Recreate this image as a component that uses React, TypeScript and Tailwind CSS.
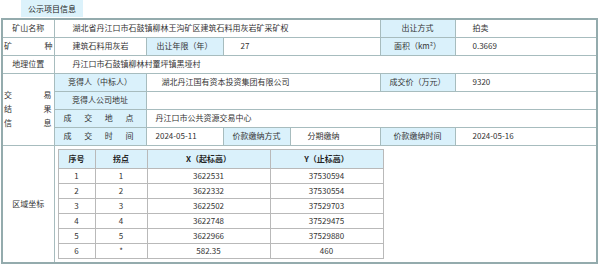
import React from "react";

const td = "border border-[#a7bcbe] p-0 h-[18px] align-middle whitespace-nowrap";
const lab = `${td} bg-[#daf1fb] text-center`;
const val = `${td} bg-white text-left`;

function Spread({ chars, className = "" }: { chars: string[]; className?: string }) {
  return (
    <div className={`flex justify-between ${className}`}>
      {chars.map((c, i) => (
        <span key={i}>{c}</span>
      ))}
    </div>
  );
}

const points = [
  ["1", "1", "3622531", "37530594"],
  ["2", "2", "3622332", "37530554"],
  ["3", "3", "3622502", "37529703"],
  ["4", "4", "3622748", "37529475"],
  ["5", "5", "3622966", "37529880"],
  ["6", "*", "582.35", "460"],
];

export default function App() {
  return (
    <div className="w-[600px] h-[267px] bg-white text-[8px] leading-[12px] text-[#333] font-['Noto_Sans_CJK_SC','Liberation_Sans',sans-serif] overflow-hidden">
      <div className="ml-[21px] w-[62px] h-[17px] bg-[#dcf2fb] flex items-center justify-center text-[#222]">
        公示项目信息
      </div>
      <table className="mt-[1px] ml-[1px] w-[597px] table-fixed border-collapse border-2 border-[#94abad]">
        <colgroup>
          <col className="w-[52px]" />
          <col className="w-[92px]" />
          <col className="w-[77px]" />
          <col className="w-[67px]" />
          <col className="w-[90px]" />
          <col className="w-[75px]" />
          <col />
        </colgroup>
        <tbody>
          <tr>
            <td className={`${td} text-center`}>矿山名称</td>
            <td colSpan={4} className={`${val} pl-[18px]`}>
              湖北省丹江口市石鼓镇柳林王沟矿区建筑石料用灰岩矿采矿权
            </td>
            <td className={lab}>出让方式</td>
            <td className={`${val} pl-[17px]`}>拍卖</td>
          </tr>
          <tr>
            <td className={td}>
              <Spread chars={["矿", "种"]} className="pl-[1px] pr-[1px]" />
            </td>
            <td className={`${val} pl-[18px]`}>建筑石料用灰岩</td>
            <td className={lab}>出让年限（年）</td>
            <td colSpan={2} className={`${val} pl-[17px]`}>27</td>
            <td className={lab}>面积（km²）</td>
            <td className={`${val} pl-[17px]`}>0.3669</td>
          </tr>
          <tr>
            <td className={`${td} text-center`}>地理位置</td>
            <td colSpan={6} className={`${val} pl-[18px]`}>丹江口市石鼓镇柳林村罿坪镇黑垭村</td>
          </tr>
          <tr>
            <td rowSpan={4} className={td}>
              <div className="flex flex-col gap-[2px] pl-[1px] pr-[2px]">
                <Spread chars={["交", "易"]} />
                <Spread chars={["结", "果"]} />
                <Spread chars={["信", "息"]} />
              </div>
            </td>
            <td className={lab}>竞得人（中标人）</td>
            <td colSpan={3} className={`${val} pl-[15px]`}>湖北丹江国有资本投资集团有限公司</td>
            <td className={lab}>成交价（万元）</td>
            <td className={`${val} pl-[17px]`}>9320</td>
          </tr>
          <tr>
            <td className={lab}>竞得人公司地址</td>
            <td colSpan={5} className={val}></td>
          </tr>
          <tr>
            <td className={lab}>
              <Spread chars={["成", "交", "地", "点"]} className="pl-[9px] pr-[12px]" />
            </td>
            <td colSpan={5} className={`${val} pl-[9px]`}>丹江口市公共资源交易中心</td>
          </tr>
          <tr>
            <td className={lab}>
              <Spread chars={["成", "交", "时", "间"]} className="pl-[9px] pr-[12px]" />
            </td>
            <td className={`${val} pl-[9px]`}>2024-05-11</td>
            <td className={lab}>价款缴纳方式</td>
            <td className={`${val} pl-[17px]`}>分期缴纳</td>
            <td className={lab}>价款缴纳时间</td>
            <td className={`${val} pl-[17px]`}>2024-05-16</td>
          </tr>
          <tr>
            <td className={`${td} text-center`}>区域坐标</td>
            <td colSpan={6} className="border border-[#a7bcbe] p-0 pt-[3px] pb-[3px] pl-[3px] align-top">
              <table className="w-[326px] table-fixed border-collapse border border-[#b9b9b9]">
                <colgroup>
                  <col className="w-[37px]" />
                  <col className="w-[52px]" />
                  <col className="w-[123px]" />
                  <col />
                </colgroup>
                <thead>
                  <tr className="bg-[#daf1fb] font-bold text-[#222]">
                    <th className="border border-[#b9b9b9] h-[19px] p-0 leading-[10px]">序号</th>
                    <th className="border border-[#b9b9b9] h-[19px] p-0 leading-[10px]">拐点</th>
                    <th className="border border-[#b9b9b9] h-[19px] p-0 leading-[10px]">X（起标高）</th>
                    <th className="border border-[#b9b9b9] h-[19px] p-0 leading-[10px]">Y（止标高）</th>
                  </tr>
                </thead>
                <tbody>
                  {points.map((r) => (
                    <tr key={r[0]}>
                      {r.map((c, i) => (
                        <td key={i} className="border border-[#b9b9b9] h-[15px] p-0 text-center leading-[10px]">
                          {c}
                        </td>
                      ))}
                    </tr>
                  ))}
                </tbody>
              </table>
            </td>
          </tr>
        </tbody>
      </table>
    </div>
  );
}
